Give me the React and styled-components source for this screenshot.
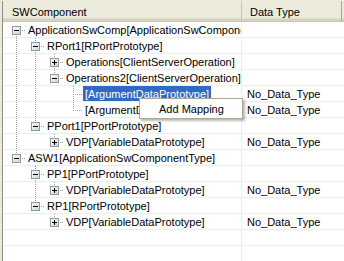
import React from "react";
import styled, { createGlobalStyle } from "styled-components";

const Global = createGlobalStyle`
  html, body { margin: 0; padding: 0; }
  body {
    background: #ece9d8;
    font-family: "Liberation Sans", Arial, sans-serif;
    font-size: 11px;
    color: #000;
    overflow: hidden;
  }
`;

const Frame = styled.div`
  position: relative;
  margin: 1px 0 0 2px;
  width: 341px;
  height: 260px;
  border-left: 1px solid #8e8e8e;
  background: #fff;
  overflow: hidden;
`;

const Header = styled.div`
  display: grid;
  grid-template-columns: 239px 100px;
  height: 21px;
  box-sizing: border-box;
  border-bottom: 1px solid #cbc7b8;
  background: linear-gradient(#ebeadb 0, #ebeadb 17px, #e2decd 17px, #e2decd 18px, #d6d2c2 18px);
`;

const HeaderCell = styled.div`
  padding: 3px 0 0 ${(p) => p.$pad}px;
  line-height: 16px;
  border-right: 1px solid ${(p) => (p.$last ? "#a9a793" : "#c7c5b2")};
  white-space: nowrap;
  overflow: hidden;
`;

const Row = styled.div`
  display: grid;
  grid-template-columns: 239px 100px;
  height: 16px;
  box-sizing: border-box;
  border-bottom: 1px solid #ededed;
`;

const TreeCell = styled.div`
  display: flex;
  align-items: flex-start;
  border-right: 1px solid #ededed;
  white-space: nowrap;
  overflow: hidden;
`;

const Guides = styled.svg`
  flex: none;
  overflow: visible;
  display: block;
`;

const Label = styled.span`
  display: block;
  height: 15px;
  box-sizing: border-box;
  padding: 1px 2px 0 2px;
  line-height: 14px;
  background: ${(p) => (p.$selected ? "#316ac5" : "transparent")};
  color: ${(p) => (p.$selected ? "#fff" : "#000")};
`;

const TypeCell = styled.div`
  padding: 1px 0 0 5px;
  line-height: 14px;
  white-space: nowrap;
  overflow: hidden;
`;

const Menu = styled.div`
  position: absolute;
  left: 136px;
  top: 97px;
  width: 104px;
  height: 21px;
  box-sizing: border-box;
  background: #fff;
  border: 1px solid #aca899;
  box-shadow: 2px 2px 2px rgba(0, 0, 0, 0.28);
`;

const MenuItem = styled.div`
  padding: 3px 0 0 19px;
  line-height: 14px;
  white-space: nowrap;
`;

const LINE = "#a0a0a0";
const IND = 19;
const C0 = 13;

function TreeGuides({ level, anc, top, bottom, exp }) {
  const width = 23 + IND * level;
  const c = C0 + IND * level;
  const cy = 8;
  const v = (x, y1, y2, k) => (
    <line
      key={k}
      x1={x + 0.5}
      x2={x + 0.5}
      y1={y1}
      y2={y2}
      stroke={LINE}
      strokeWidth="1"
      strokeDasharray="1 1"
    />
  );
  const parts = [];
  anc.forEach((on, i) => {
    if (on) parts.push(v(C0 + IND * i, 0, 16, "a" + i));
  });
  if (top) parts.push(v(c, 0, cy, "t"));
  if (bottom) parts.push(v(c, cy, 16, "b"));
  parts.push(
    <line
      key="h"
      x1={c}
      x2={width}
      y1={cy + 0.5}
      y2={cy + 0.5}
      stroke={LINE}
      strokeWidth="1"
      strokeDasharray="1 1"
    />
  );
  return (
    <Guides width={width} height={15} viewBox={`0 0 ${width} 15`}>
      <defs>
        <linearGradient id="exg" x1="0" y1="0" x2="1" y2="1">
          <stop offset="0" stopColor="#ffffff" />
          <stop offset="1" stopColor="#d4d0c4" />
        </linearGradient>
      </defs>
      {parts}
      {exp && (
        <g>
          <rect
            x={c - 4 + 0.5}
            y={cy - 4 + 0.5}
            width="8"
            height="8"
            fill="url(#exg)"
            stroke="#8a9aa6"
            strokeWidth="1"
          />
          <line x1={c - 2} x2={c + 3} y1={cy + 0.5} y2={cy + 0.5} stroke="#000" strokeWidth="1" />
          {exp === "+" && (
            <line x1={c + 0.5} x2={c + 0.5} y1={cy - 2} y2={cy + 3} stroke="#000" strokeWidth="1" />
          )}
        </g>
      )}
    </Guides>
  );
}

const rows = [
  { level: 0, label: "ApplicationSwComp[ApplicationSwComponentType]", anc: [], top: false, bottom: true, exp: "-" },
  { level: 1, label: "RPort1[RPortPrototype]", anc: [true], top: true, bottom: true, exp: "-" },
  { level: 2, label: "Operations[ClientServerOperation]", anc: [true, true], top: true, bottom: true, exp: "+" },
  { level: 2, label: "Operations2[ClientServerOperation]", anc: [true, true], top: true, bottom: false, exp: "-" },
  { level: 3, label: "[ArgumentDataPrototype]", anc: [true, true, false], top: true, bottom: true, selected: true, type: "No_Data_Type" },
  { level: 3, label: "[ArgumentDataPrototype]", anc: [true, true, false], top: true, bottom: false, type: "No_Data_Type" },
  { level: 1, label: "PPort1[PPortPrototype]", anc: [true], top: true, bottom: false, exp: "-" },
  { level: 2, label: "VDP[VariableDataPrototype]", anc: [true, false], top: true, bottom: false, exp: "+", type: "No_Data_Type" },
  { level: 0, label: "ASW1[ApplicationSwComponentType]", anc: [], top: true, bottom: false, exp: "-" },
  { level: 1, label: "PP1[PPortPrototype]", anc: [false], top: true, bottom: true, exp: "-" },
  { level: 2, label: "VDP[VariableDataPrototype]", anc: [false, true], top: true, bottom: false, exp: "+", type: "No_Data_Type" },
  { level: 1, label: "RP1[RPortPrototype]", anc: [false], top: true, bottom: false, exp: "-" },
  { level: 2, label: "VDP[VariableDataPrototype]", anc: [false, false], top: true, bottom: false, exp: "+", type: "No_Data_Type" },
];

export default function App() {
  return (
    <>
      <Global />
      <Frame>
        <Header>
          <HeaderCell $pad={9}>SWComponent</HeaderCell>
          <HeaderCell $pad={8} $last>Data Type</HeaderCell>
        </Header>
        {rows.map((r, i) => (
          <Row key={i}>
            <TreeCell>
              <TreeGuides {...r} />
              <Label $selected={r.selected}>{r.label}</Label>
            </TreeCell>
            <TypeCell>{r.type || ""}</TypeCell>
          </Row>
        ))}
        {[0, 1, 2].map((i) => (
          <Row key={"e" + i}>
            <TreeCell />
            <TypeCell />
          </Row>
        ))}
        <Menu>
          <MenuItem>Add Mapping</MenuItem>
        </Menu>
      </Frame>
    </>
  );
}
